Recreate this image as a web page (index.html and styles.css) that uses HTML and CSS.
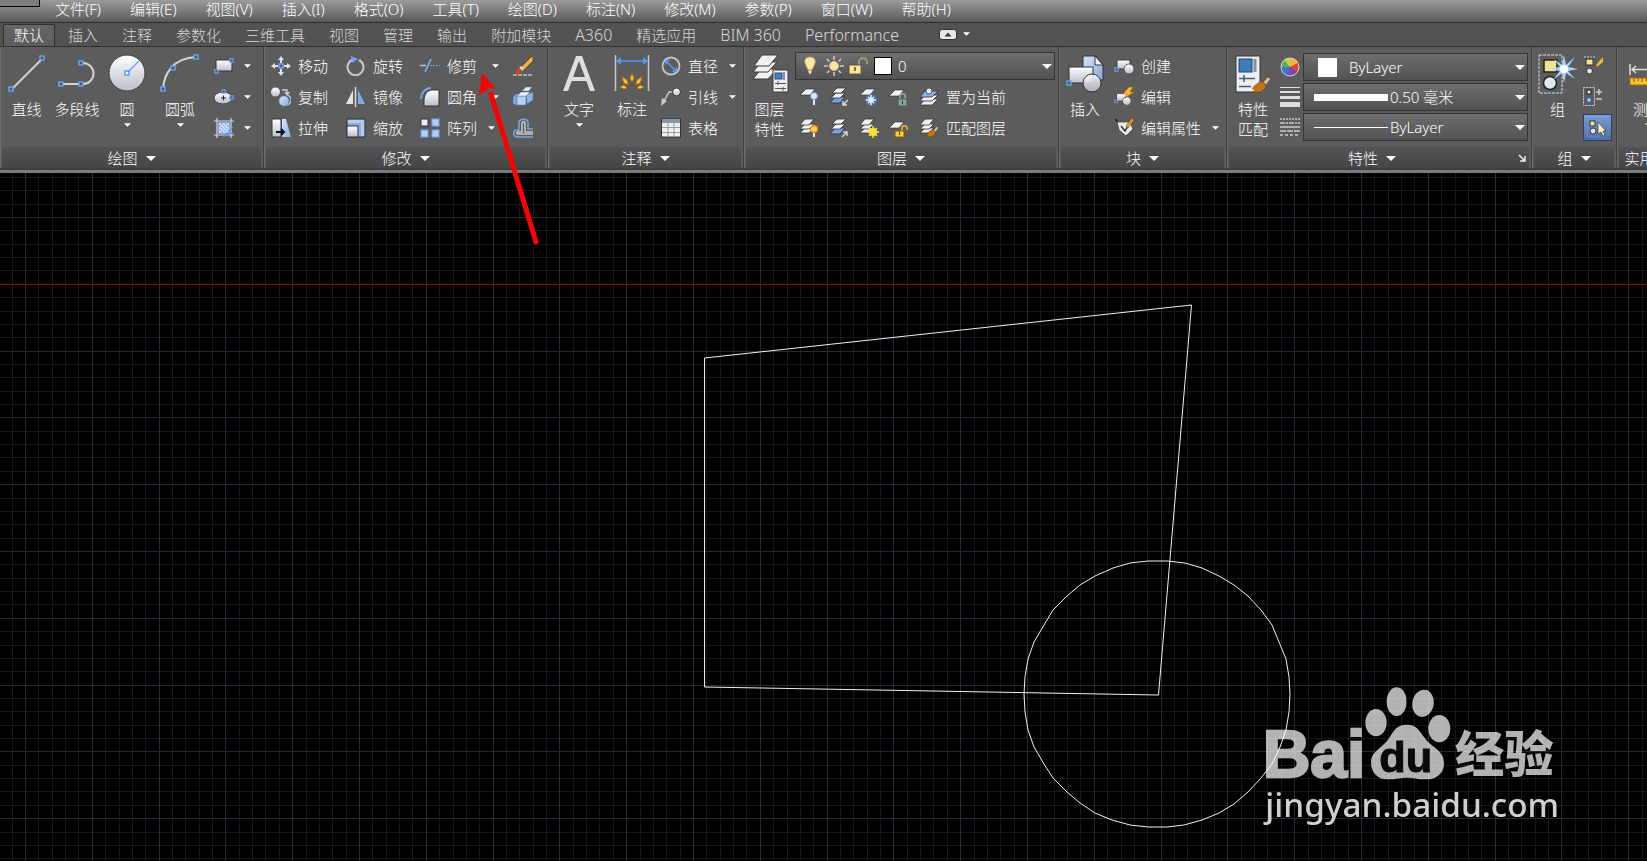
FILE: index.html
```html
<!DOCTYPE html>
<html lang="zh-CN">
<head>
    <meta charset="utf-8">
    <title>CAD</title>
    <link rel="stylesheet" href="styles.css">
</head>
<body>
<svg class="defs" aria-hidden="true">
    <defs>
        <linearGradient id="silver" x1="0" y1="0" x2="0" y2="1"><stop offset="0" stop-color="#ffffff"/><stop offset="1" stop-color="#b9becb"/></linearGradient>
        <linearGradient id="blue" x1="0" y1="0" x2="1" y2="1"><stop offset="0" stop-color="#d9e8fb"/><stop offset="1" stop-color="#83a9dc"/></linearGradient>
    </defs>
    <symbol id="down" viewBox="0 0 8 4"><path d="M0 0H8L4 4Z" fill="#fff"/></symbol>
    <symbol id="grip" viewBox="0 0 6 6"><rect x="1" y="1" width="4" height="4" fill="#4b5568" stroke="#6ea3f2" stroke-width="1.4"/></symbol>
    <symbol id="sheet" viewBox="0 0 20 20"><path d="M7 2H16L11 8H1Z" fill="#f4f4f4" stroke="#333" stroke-width=".7"/></symbol>
    <symbol id="stack" viewBox="0 0 20 20"><g fill="#eee" stroke="#333" stroke-width=".8"><path d="M6 10H15L10 15H1Z"/><path d="M6 6H15L10 11H1Z"/><path d="M6 1H15L10 7H1Z"/></g></symbol>
    <symbol id="bstack" viewBox="0 0 20 20"><g fill="#eee" stroke="#333" stroke-width=".8"><path d="M6 10H16L11 16H1Z" fill="#6fa3e6"/><path d="M7 6H16L11 11H2Z"/><path d="M8 1H17L12 6H3Z"/></g></symbol>
    <symbol id="block" viewBox="0 0 20 20"><path d="M3 4H16V13H3Z" fill="url(#silver)" stroke="#3c3c3c"/><circle cx="15" cy="13" r="5" fill="url(#silver)" stroke="#555"/><use href="#grip" x="0" y="11" width="5" height="5"/></symbol>
    <symbol id="brush" viewBox="0 0 20 20"><path d="M12 7 17 1 20 3 15 10Z" fill="#d9c7ab" stroke="#5a3c1e" stroke-width=".6"/><path d="M2 11C6 8 9 5 12 7L15 11C13 16 9 19 0 18L3 15 0 14Z" fill="#c0731b" stroke="#6d3a08" stroke-width=".6"/></symbol>
</svg>

<div class="app">
    <nav class="menubar">
        <span class="corner"></span>
        <button>文件(F)</button>
        <button>编辑(E)</button>
        <button>视图(V)</button>
        <button>插入(I)</button>
        <button>格式(O)</button>
        <button>工具(T)</button>
        <button>绘图(D)</button>
        <button>标注(N)</button>
        <button>修改(M)</button>
        <button>参数(P)</button>
        <button>窗口(W)</button>
        <button>帮助(H)</button>
    </nav>

    <nav class="tabs">
        <button class="active">默认</button>
        <button>插入</button>
        <button>注释</button>
        <button>参数化</button>
        <button>三维工具</button>
        <button>视图</button>
        <button>管理</button>
        <button>输出</button>
        <button>附加模块</button>
        <button class="latin">A360</button>
        <button>精选应用</button>
        <button class="latin">BIM 360</button>
        <button class="latin">Performance</button>
        <button class="collapse" aria-label="最小化">
            <svg width="18" height="11" viewBox="0 0 18 11"><rect x=".5" y=".5" width="17" height="10" rx="2.5" fill="#e6e8ec" stroke="#333"/><path d="M5.500 7.500H12.500L9 3.500Z" fill="#333"/></svg>
            <svg class="arrow"><use href="#down"/></svg>
        </button>
    </nav>

    <div class="ribbon">
        <!-- draw -->
        <section class="panel draw">
            <div class="body">
                <button class="big">
                    <svg viewBox="0 0 40 40"><path d="M5 35 35 5" stroke="#d2d2d2" stroke-width="2"/><use href="#grip" x="1" y="32" width="6" height="6"/><use href="#grip" x="32" y="1" width="6" height="6"/></svg>
                    直线
                </button>
                <button class="big">
                    <svg viewBox="0 0 40 40"><path d="M4 30H26A10 10 0 0 0 26 9H23" fill="none" stroke="#d2d2d2" stroke-width="2"/><use href="#grip" x="1" y="27" width="6" height="6"/><use href="#grip" x="21" y="27" width="6" height="6"/><use href="#grip" x="21" y="6" width="6" height="6"/></svg>
                    多段线
                </button>
                <button class="big">
                    <svg viewBox="0 0 40 40"><circle cx="20" cy="19" r="18" fill="url(#silver)" stroke="#3d3f44"/><path d="M20 19 32 7" stroke="#6da4f5" stroke-width="1.500"/><rect x="18" y="17" width="4" height="4" fill="#fff" stroke="#5d98f0" stroke-width="1.500"/></svg>
                    圆
                    <svg class="arrow"><use href="#down"/></svg>
                </button>
                <button class="big">
                    <svg viewBox="0 0 40 40"><path d="M3 35C4 20 13 4 36 3" fill="none" stroke="#d2d2d2" stroke-width="2"/><use href="#grip" x="0" y="32" width="6" height="6"/><use href="#grip" x="10" y="11" width="6" height="6"/><use href="#grip" x="33" y="0" width="6" height="6"/></svg>
                    圆弧
                    <svg class="arrow"><use href="#down"/></svg>
                </button>
                <div class="col">
                    <button class="tool" aria-label="矩形"><svg viewBox="0 0 20 20"><rect x="2" y="4" width="16" height="11" fill="url(#silver)" stroke="#333"/><use href="#grip" x="0" y="13" width="5" height="5"/><use href="#grip" x="15" y="2" width="5" height="5"/></svg><svg class="arrow"><use href="#down"/></svg></button>
                    <button class="tool" aria-label="椭圆"><svg viewBox="0 0 20 20"><ellipse cx="9" cy="11" rx="9" ry="6" fill="url(#silver)" stroke="#444"/><path d="M7 11H12M9.500 8.500V13.500" stroke="#222"/><use href="#grip" x="7" y="2" width="5" height="5"/><use href="#grip" x="15" y="8" width="5" height="5"/></svg><svg class="arrow"><use href="#down"/></svg></button>
                    <button class="tool" aria-label="图案填充"><svg viewBox="0 0 20 20"><rect x="4" y="4" width="12" height="12" fill="#cbdcf6" stroke="#3868bb"/><path d="M5 7 13 15M7 5 15 13M11 5 15 9M5 11 9 15" stroke="#79a4e6"/><path d="M0 3H20M0 17H20M3 0V20M17 0V20" stroke="#d7d7d7" stroke-width="1.200"/><path d="M9 20 19 9M14 15V19M11 15.500H19" stroke="#5796f5"/></svg><svg class="arrow"><use href="#down"/></svg></button>
                </div>
            </div>
            <h2>绘图<svg class="arrow"><use href="#down"/></svg></h2>
        </section>

        <!-- modify -->
        <section class="panel modify">
            <div class="body">
                <div class="col">
                    <button class="tool"><svg viewBox="0 0 20 20"><path d="M10 0 13 4H11V7H9V4H7ZM10 20 13 16H11V13H9V16H7ZM0 10 4 7V9H7V11H4V13ZM20 10 16 7V9H13V11H16V13Z" fill="#e2e2e2"/><rect x="8" y="8" width="4" height="4" fill="none" stroke="#68a0f4" stroke-width="1.500"/></svg>移动</button>
                    <button class="tool"><svg viewBox="0 0 20 20"><circle cx="4.500" cy="5" r="4.500" fill="url(#silver)"/><path d="M16 8A5 5 0 1 1 14 18" fill="none" stroke="#a9c2e6" stroke-width="1.500"/><circle cx="13" cy="14" r="5" fill="url(#blue)" stroke="#6f93c5" stroke-width=".5"/><path d="M11 3H16V7M14 5 16 7.500 18.500 5" fill="none" stroke="#ccc" stroke-width="1.300"/></svg>复制</button>
                    <button class="tool"><svg viewBox="0 0 20 20"><path d="M1 1H10V19H1Z" fill="url(#silver)" stroke="#333"/><path d="M11 1H15L20 19H11Z" fill="url(#blue)"/><path d="M5 14H13M10 11 13 14 10 17" fill="none" stroke="#111" stroke-width="2"/></svg>拉伸</button>
                </div>
                <div class="col">
                    <button class="tool"><svg viewBox="0 0 20 20"><path d="M13 4A8 8 0 1 1 6 4" fill="none" stroke="#c8c8c8" stroke-width="2"/><path d="M5 0 12 3 6 7Z" fill="#6ea5f4"/></svg>旋转</button>
                    <button class="tool"><svg viewBox="0 0 20 20"><path d="M7 3V17H0Z" fill="#e3e3e3"/><path d="M12 3V17H19Z" fill="#7fabea"/><path d="M9.500 0V20" stroke="#ddd" stroke-width="1.500"/></svg>镜像</button>
                    <button class="tool"><svg viewBox="0 0 20 20"><rect x="1" y="1" width="18" height="18" fill="#8eade0" stroke="#333"/><path d="M2 2H18V18H15V5H2Z" fill="#b5cbef"/><rect x="1" y="8" width="11" height="11" fill="url(#silver)" stroke="#333"/></svg>缩放</button>
                </div>
                <div class="col">
                    <button class="tool"><svg viewBox="0 0 20 20"><path d="M5 16 11 3" stroke="#6fa5f4" stroke-width="1.800"/><path d="M0 9.500H6" stroke="#c5c5c5" stroke-width="1.500"/><path d="M10 9.500H20" stroke="#6fa5f4" stroke-width="1.200" stroke-dasharray="2 1"/></svg>修剪<svg class="arrow"><use href="#down"/></svg></button>
                    <button class="tool"><svg viewBox="0 0 20 20"><path d="M4 19V13C4 7 8 3 12 3H19V19Z" fill="url(#silver)" stroke="#333"/><path d="M1 12C1 5 6 1 11 1" fill="none" stroke="#6fa5f4" stroke-width="1.800"/></svg>圆角<svg class="arrow"><use href="#down"/></svg></button>
                    <button class="tool"><svg viewBox="0 0 20 20"><rect x="1" y="1" width="7" height="7" fill="#eee" stroke="#333"/><g fill="#b4cdf5" stroke="#6fa0ee"><rect x="12" y="1" width="7" height="7"/><rect x="1" y="12" width="7" height="7"/><rect x="12" y="12" width="7" height="7"/></g></svg>阵列<svg class="arrow near"><use href="#down"/></svg></button>
                </div>
                <div class="col">
                    <button class="tool" aria-label="删除"><svg viewBox="0 0 20 20"><path d="M0 19H20" stroke="#eee" stroke-dasharray="4 1"/><path d="M8 11 18 1 20 0V5L11 14Z" fill="#e9b23a" stroke="#5b3a0d" stroke-width=".7"/><path d="M8 10 11 13 9 15 6 12Z" fill="#ddd"/><path d="M3 14 7 12 9 15C8 18 5 18 3 18Z" fill="#d0480e"/></svg></button>
                    <button class="tool" aria-label="分解"><svg viewBox="0 0 20 20"><g stroke="#4f6d99" stroke-width=".5"><path d="M0 10 3 7H6V15L3 18 0 17Z" fill="#7fa6dc"/><path d="M10 3 13 0H19L16 4H9Z" fill="#e8effa"/><path d="M13 8 20 5V13L14 17Z" fill="#8db2e4"/><path d="M4 9H13V18H4Z" fill="#b6d1f4"/><path d="M4 9 8 5H17L13 9Z" fill="#eef4fc"/></g></svg></button>
                    <button class="tool" aria-label="偏移"><svg viewBox="0 0 20 20"><path d="M20 19H4C-1 18 0 12 4 12H6V5C6 0 15 0 15 5V11H20" fill="none" stroke="#78a6ec" stroke-width="1.500"/><path d="M20 16H5C3 16 3 14 5 14H9V6C9 3 12 3 12 6V14H20" fill="none" stroke="#c9c9c9" stroke-width="1.500"/></svg></button>
                </div>
            </div>
            <h2>修改<svg class="arrow"><use href="#down"/></svg></h2>
        </section>

        <!-- annotation -->
        <section class="panel annotate">
            <div class="body">
                <button class="big">
                    <svg viewBox="0 0 40 40"><path d="M4 37 17 2H23L36 37H31L20 7 9 37ZM10 23H30V27H9Z" fill="#dedede"/></svg>
                    文字
                    <svg class="arrow"><use href="#down"/></svg>
                </button>
                <button class="big">
                    <svg viewBox="0 0 40 40"><path d="M3.500 1V37M36.500 1V37" stroke="#c5c5c5" stroke-width="1.500"/><path d="M6 7H34" stroke="#5795ed" stroke-width="1.500"/><path d="M4 7 9 3V11ZM36 7 31 3V11Z" fill="#5795ed"/><g fill="#ffc62a" stroke="#c9650e" stroke-width=".7"><path d="M20 20 22 24 20 28 18 24Z"/><path d="M10 23 15 26 16 31 12 29Z"/><path d="M30 23 25 26 24 31 28 29Z"/><path d="M8 33 12 31 15 34 12 35Z"/><path d="M32 33 28 31 25 34 28 35Z"/></g></svg>
                    标注
                </button>
                <div class="col">
                    <button class="tool"><svg viewBox="0 0 20 20"><circle cx="10" cy="10" r="8.500" fill="none" stroke="#c5c5c5" stroke-width="1.800"/><path d="M6 6 14 14" stroke="#5a99f5" stroke-width="1.500"/><path d="M4 4H9L4 9ZM16 16H11L16 11Z" fill="#5a99f5"/></svg>直径<svg class="arrow"><use href="#down"/></svg></button>
                    <button class="tool"><svg viewBox="0 0 20 20"><path d="M12 5H8L3 14" fill="none" stroke="#ccc" stroke-width="1.500"/><path d="M0 19 1 11 6 14Z" fill="#ccc"/><circle cx="15.500" cy="5" r="4" fill="url(#silver)" stroke="#333"/></svg>引线<svg class="arrow"><use href="#down"/></svg></button>
                    <button class="tool"><svg viewBox="0 0 20 20"><rect x=".5" y="1" width="19" height="18" fill="#eee" stroke="#333"/><path d="M1 2H19V5H1Z" fill="#8796ad"/><path d="M1 9.500H19M1 14.500H19M7 5V19M13 5V19" stroke="#9a9a9a"/></svg>表格</button>
                </div>
            </div>
            <h2>注释<svg class="arrow"><use href="#down"/></svg></h2>
        </section>

        <!-- layers -->
        <section class="panel layers">
            <div class="body">
                <button class="big">
                    <svg viewBox="0 0 40 40"><g fill="#f1f1f1" stroke="#3c3c3c"><path d="M11 15H27L18 25H3Z"/><path d="M11 8H27L18 18H3Z"/><path d="M12 1H28L19 12H4Z"/></g><rect x="23" y="16" width="15" height="22" fill="#eceef2" stroke="#3c3c3c"/><rect x="25" y="19" width="7" height="6" fill="#4b7fc4" stroke="#274b80"/><path d="M34 18V26" stroke="#8793a8" stroke-width="2"/><path d="M25 29.500H36M25 34.500H36M28 27V31M33 33V37" stroke="#555"/></svg>
                    图层<br>特性
                </button>
                <div class="layer-side">
                    <div class="combo">
                        <svg width="20" height="20" viewBox="0 0 20 20"><path d="M10 1C14 1 16 4 15 7L12 14H8L5 7C4 4 6 1 10 1Z" fill="#fbe7a0" stroke="#c9a94f" stroke-width=".6"/><path d="M8 14H12V16L10 19 8 16Z" fill="#ddd" stroke="#555" stroke-width=".5"/></svg>
                        <svg width="20" height="20" viewBox="0 0 20 20"><path d="M10 0V4M10 16V20M0 10H4M16 10H20M3 3 5.500 5.500M14.500 14.500 17 17M17 3 14.500 5.500M3 17 5.500 14.500" stroke="#cfcfc4" stroke-width="1.500"/><circle cx="10" cy="10" r="4.500" fill="#fbe5a0" stroke="#d8c69a"/></svg>
                        <svg width="20" height="20" viewBox="0 0 20 20"><path d="M11 9V6C11 1 19 1 19 6V8" fill="none" stroke="#a59c7f" stroke-width="1.800"/><rect x="1" y="9" width="12" height="9" fill="#fbe7a0" stroke="#67583a"/><path d="M7 11V15" stroke="#554827" stroke-width="1.500"/></svg>
                        <span class="swatch outlined"></span>
                        <select aria-label="图层"><option>0</option></select>
                        <svg class="arrow"><use href="#down"/></svg>
                    </div>
                    <div class="layer-row">
                        <button class="tool" aria-label="关闭图层"><svg viewBox="0 0 20 20"><use href="#sheet"/><path d="M15 12V18" stroke="#eee" stroke-width="2"/><circle cx="15" cy="9" r="3.500" fill="#d5eaff" stroke="#6b9fdc"/></svg></button>
                        <button class="tool" aria-label="隔离图层"><svg viewBox="0 0 20 20"><use href="#bstack"/><path d="M19 13 14 18M14 14V18H18" fill="none" stroke="#d5d5d5" stroke-width="1.500"/></svg></button>
                        <button class="tool" aria-label="冻结图层"><svg viewBox="0 0 20 20"><use href="#sheet"/><path d="M12 7V19M6 13H18M8 9 16 17M16 9 8 17" stroke="#4b7cba" stroke-width="3"/><path d="M12 8V18M7 13H17M9 10 15 16M15 10 9 16" stroke="#eaf4ff" stroke-width="1.500"/></svg></button>
                        <button class="tool" aria-label="锁定图层"><svg viewBox="0 0 20 20"><use href="#sheet" x="-1" y="1"/><path d="M11 12V9C11 6 16 6 16 9V12" fill="none" stroke="#94aaa8" stroke-width="1.500"/><rect x="9" y="12" width="9" height="7" fill="#86a3a2" stroke="#445b5a"/><path d="M13.500 14V17" stroke="#333"/></svg></button>
                        <button class="tool"><svg viewBox="0 0 20 20"><g stroke="#333" stroke-width=".8" fill="#eee"><path d="M6 12H19L13 18H1Z"/><path d="M6 8H19L13 14H1Z"/><path d="M6 4H19L13 10H1Z" fill="#82b2ef"/></g><circle cx="10" cy="4" r="3" fill="#eee" stroke="#555"/></svg>置为当前</button>
                    </div>
                    <div class="layer-row">
                        <button class="tool" aria-label="打开所有图层"><svg viewBox="0 0 20 20"><use href="#stack"/><path d="M15 14V19" stroke="#eee" stroke-width="2"/><circle cx="15" cy="11" r="3.500" fill="#ffd95c" stroke="#ef8613" stroke-width="1.500"/></svg></button>
                        <button class="tool" aria-label="取消隔离"><svg viewBox="0 0 20 20"><use href="#bstack"/><path d="M13 19 18 14M14 14H18V18" fill="none" stroke="#d5d5d5" stroke-width="1.500"/></svg></button>
                        <button class="tool" aria-label="解冻所有图层"><svg viewBox="0 0 20 20"><use href="#stack"/><path d="M14 8V20M8 14H20M10 10 18 18M18 10 10 18" stroke="#f5dd77" stroke-width="1.500"/><circle cx="14" cy="14" r="4" fill="#ffe12e"/></svg></button>
                        <button class="tool" aria-label="解锁图层"><svg viewBox="0 0 20 20"><use href="#sheet" x="-1" y="2"/><path d="M13 13V10C13 7 18 7 18 10V12" fill="none" stroke="#edbd26" stroke-width="1.500"/><rect x="6" y="13" width="9" height="6" fill="#f9cf3d" stroke="#7c5c0b"/><path d="M10.500 14V17" stroke="#553b00"/></svg></button>
                        <button class="tool"><svg viewBox="0 0 20 20"><use href="#stack"/><use href="#brush" x="7" y="8" width="13" height="12"/></svg>匹配图层</button>
                    </div>
                </div>
            </div>
            <h2>图层<svg class="arrow"><use href="#down"/></svg></h2>
        </section>

        <!-- block -->
        <section class="panel block">
            <div class="body">
                <button class="big">
                    <svg viewBox="0 0 40 40"><path d="M18 2H31L38 11V26H18Z" fill="url(#blue)" stroke="#333"/><path d="M30 2V11H38Z" fill="#f2f5fb" stroke="#333"/><rect x="4" y="13" width="24" height="16" fill="url(#silver)" stroke="#333"/><circle cx="27" cy="29" r="9" fill="url(#silver)" fill-opacity=".85" stroke="#333"/><use href="#grip" x="1" y="26" width="6" height="6"/></svg>
                    插入
                </button>
                <div class="col">
                    <button class="tool"><svg viewBox="0 0 20 20"><use href="#block"/></svg>创建</button>
                    <button class="tool"><svg viewBox="0 0 20 20"><use href="#block" y="3" width="17" height="17"/><path d="M15 0 9 7H13L11 11 20 5H16L19 0Z" fill="#ffb92b" stroke="#a75b09" stroke-width=".6"/></svg>编辑</button>
                    <button class="tool"><svg viewBox="0 0 20 20"><path d="M1 1 5 5" stroke="#222" stroke-width="1.500"/><path d="M3 4H16L19 11 12 18 5 12Z" fill="#e8e8e8" stroke="#333" stroke-width=".7"/><path d="M7 8 11 13 14 8" fill="none" stroke="#333" stroke-width="1.500"/><path d="M12 8 18 0 20 2 14 10Z" fill="#e49a2d" stroke="#6e410c" stroke-width=".5"/></svg>编辑属性<svg class="arrow"><use href="#down"/></svg></button>
                </div>
            </div>
            <h2>块<svg class="arrow"><use href="#down"/></svg></h2>
        </section>

        <!-- properties -->
        <section class="panel props">
            <div class="body">
                <button class="big">
                    <svg viewBox="0 0 40 40"><rect x="3" y="2" width="24" height="36" fill="#eceef2" stroke="#333"/><rect x="6" y="5" width="13" height="13" fill="#3e7dba" stroke="#1d4878"/><path d="M22 5V18" stroke="#8590a3" stroke-width="3"/><path d="M6 24.500H22M6 32.500H18M11 21V28" stroke="#4d5769" stroke-width="1.500"/><use href="#brush" x="18" y="22" width="21" height="18"/></svg>
                    特性<br>匹配
                </button>
                <div class="prop-rows">
                    <div class="prop">
                        <svg width="20" height="20" viewBox="0 0 20 20"><path d="M10 10V1A9 9 0 0 1 18 6Z" fill="#f4b53a"/><path d="M10 10 18 6A9 9 0 0 1 17 15Z" fill="#df4432"/><path d="M10 10 17 15A9 9 0 0 1 7 18Z" fill="#7748bd"/><path d="M10 10 7 18A9 9 0 0 1 1 10Z" fill="#3d73dc"/><path d="M10 10H1A9 9 0 0 1 4 3Z" fill="#57b451"/><path d="M10 10 4 3A9 9 0 0 1 10 1Z" fill="#bdd64b"/><circle cx="10" cy="10" r="9" fill="none" stroke="#d8d8d8"/></svg>
                        <div class="combo">
                            <span class="swatch"></span>
                            <select aria-label="颜色"><option>ByLayer</option></select>
                            <svg class="arrow"><use href="#down"/></svg>
                        </div>
                    </div>
                    <div class="prop">
                        <svg width="20" height="20" viewBox="0 0 20 20"><path d="M0 0H20V1H0ZM0 4H20V6H0ZM0 9H20V12H0ZM0 15H20V20H0Z" fill="#ddd"/></svg>
                        <div class="combo">
                            <span class="weight thick"></span>
                            <select aria-label="线宽"><option>0.50 毫米</option></select>
                            <svg class="arrow"><use href="#down"/></svg>
                        </div>
                    </div>
                    <div class="prop">
                        <svg width="20" height="20" viewBox="0 0 20 20" stroke="#ccc" stroke-width="1.500"><path d="M0 2H20" stroke-dasharray="2 1"/><path d="M0 6H20" stroke-dasharray="5 1 2 1"/><path d="M0 10H20"/><path d="M0 14H20" stroke-dasharray="6 1"/><path d="M0 18H20" stroke-dasharray="3 2"/></svg>
                        <div class="combo">
                            <span class="weight"></span>
                            <select aria-label="线型"><option>ByLayer</option></select>
                            <svg class="arrow"><use href="#down"/></svg>
                        </div>
                    </div>
                </div>
            </div>
            <h2>特性<svg class="arrow"><use href="#down"/></svg>
                <svg class="launcher" viewBox="0 0 8 8"><path d="M1 1 6 6M7 2V7H2" fill="none" stroke="#eee" stroke-width="1.500"/></svg>
            </h2>
        </section>

        <!-- group -->
        <section class="panel group">
            <div class="body">
                <button class="big">
                    <svg viewBox="0 0 40 40"><rect x="1" y="1" width="23" height="38" fill="none" stroke="#ddd" stroke-dasharray="3 1"/><rect x="6" y="6" width="13" height="12" fill="#eee390" stroke="#222" stroke-width="1.500"/><circle cx="12" cy="29" r="6.500" fill="#dce9ef" stroke="#222" stroke-width="1.500"/><path d="M26 1 28 11 37 3 30 13 40 15 30 17 37 25 28 19 26 29 24 19 15 26 22 17 12 15 22 13 16 5 24 11Z" fill="#a9d5ff"/><circle cx="26" cy="15" r="4" fill="#fff"/></svg>
                    组
                </button>
                <div class="col">
                    <button class="tool" aria-label="组编辑"><svg viewBox="0 0 20 20"><path d="M1 1H12" stroke="#ccc" stroke-dasharray="2 1"/><rect x="3" y="3" width="7" height="6" fill="#eee390" stroke="#333"/><circle cx="6.500" cy="15" r="3" fill="#dbe8ec" stroke="#333"/><path d="M13 9 20 1V6L14 11Z" fill="#efbb34"/><path d="M11 12 13 9 15 11Z" fill="#cf3c27"/></svg></button>
                    <button class="tool" aria-label="添加删除"><svg viewBox="0 0 20 20"><rect x=".5" y=".5" width="11" height="18" fill="none" stroke="#ccc" stroke-dasharray="2 1"/><rect x="4" y="3" width="4" height="4" fill="#ddd" stroke="#222"/><circle cx="6" cy="13" r="2.500" fill="#9fc3f7" stroke="#234f94"/><path d="M13 5H19M16 2V8M13 12H19" stroke="#ccc" stroke-width="1.500"/></svg></button>
                    <button class="tool on" aria-label="组选择"><svg viewBox="0 0 20 20"><rect x=".5" y=".5" width="11" height="18" fill="none" stroke="#4e93f5" stroke-dasharray="2 1"/><rect x="3" y="3" width="5" height="5" fill="#eee390" stroke="#333"/><circle cx="6" cy="13" r="3" fill="#dbe8ec" stroke="#333"/><path d="M11 4V16L14 14 16 18 18 17 16 13H19Z" fill="#f7f4c9" stroke="#333" stroke-width=".7"/></svg></button>
                </div>
            </div>
            <h2>组<svg class="arrow"><use href="#down"/></svg></h2>
        </section>

        <!-- utilities -->
        <section class="panel utils">
            <div class="body">
                <button class="big">
                    <svg viewBox="0 0 40 40"><path d="M2 10V21M38 10V21M4 15.500H36M8 12 4 15.500 8 19" fill="none" stroke="#ddd" stroke-width="1.500"/><rect x="2" y="24" width="36" height="7" fill="#f3c531" stroke="#a9680e"/><path d="M6 24V28M10 24V27M14 24V28M18 24V27M22 24V28M26 24V27M30 24V28" stroke="#835008"/></svg>
                    测量
                    <svg class="arrow"><use href="#down"/></svg>
                </button>
            </div>
            <h2>实用工具<svg class="arrow"><use href="#down"/></svg></h2>
        </section>
    </div>

    <main class="canvas">
        <svg class="drawing" id="drawing">
            <path id="minor" class="minor"/>
            <path id="major" class="major"/>
            <line class="axis" x1="0" y1="111" x2="100%" y2="111"/>
            <polygon class="shape" points="704.5,185 1191.500,132 1158.500,522 704.5,514"/>
            <polygon class="shape" points="1148,388 1167,388 1185,390 1202,395 1219,403 1234,412 1248,423 1261,437 1272,452 1286,486 1289,504 1290,521 1289,539 1286,557 1280,574 1272,591 1261,605 1248,619 1234,631 1219,640 1202,647 1184,652 1167,654 1148,654 1130,652 1112,647 1095,640 1080,630 1067,619 1053,605 1044,591 1034,574 1028,557 1025,539 1024,521 1025,504 1028,486 1034,469 1044,452 1053,437 1067,423 1080,412 1095,403 1113,395 1130,390"/>
        </svg>
        <svg class="watermark" viewBox="0 0 990 510">
            <g class="logo-fill">
                <text class="logo" x="68" y="318">Bai</text>
                <ellipse cx="408" cy="155" rx="32" ry="41"/>
                <ellipse cx="470" cy="92" rx="30" ry="43"/>
                <ellipse cx="549" cy="97" rx="32" ry="41" transform="rotate(10 549 97)"/>
                <ellipse cx="598" cy="173" rx="33" ry="41"/>
                <path d="M502 161C540 161 543 198 575 222C605 244 612 258 612 278C612 308 588 325 560 325C532 325 520 320 502 320C482 320 465 325 440 325C415 325 393 305 393 275C393 242 425 232 445 205C460 183 466 161 502 161Z"/>
                <text class="logo-cn" x="645" y="304">经验</text>
            </g>
            <text class="logo-du" x="418" y="302">du</text>
            <text class="site" x="76" y="439">jingyan.baidu.com</text>
        </svg>
    </main>

    <svg class="pointer" viewBox="0 0 70 180" aria-hidden="true">
        <path d="M59 172 14 24" stroke="#fe0000" stroke-width="5" stroke-linecap="round"/>
        <path d="M5 3 19 19 12 18 2 25Z" fill="#fe0000"/>
    </svg>
</div>

<script>
    const STEP = 66.8;

    function drawGrid() {
        const svg = document.getElementById('drawing');
        const w = svg.clientWidth;
        const h = svg.clientHeight;
        let minor = '';
        let major = '';
        // first major lines sit at x = 25, y = 44
        for (let i = -1; 25 + i * STEP / 5 < w; i++) {
            const line = `M${Math.round(25 + i * STEP / 5) + 0.5} 0V${h}`;
            if (i % 5 === 0) major += line; else minor += line;
        }
        for (let i = -3; 44 + i * STEP / 5 < h; i++) {
            const line = `M0 ${Math.round(44 + i * STEP / 5) + 0.5}H${w}`;
            if (i % 5 === 0) major += line; else minor += line;
        }
        document.getElementById('minor').setAttribute('d', minor);
        document.getElementById('major').setAttribute('d', major);
    }

    drawGrid();
    window.addEventListener('resize', drawGrid);
</script>
</body>
</html>
```
FILE: styles.css
```css
* {
    box-sizing: border-box;
}
body {
    margin: 0;
    background: #000;
    color: #fff;
    font-family: "Noto Sans", "Noto Sans CJK SC", sans-serif;
    font-size: 15px;
    font-weight: 300;
    line-height: 20px;
    overflow: hidden;
}
button, select {
    margin: 0;
    padding: 0;
    border: 0;
    background: none;
    color: inherit;
    font: inherit;
    white-space: nowrap;
}
svg {
    display: block;
    flex: none;
}
.defs {
    position: absolute;
    width: 0;
    height: 0;
}
.app {
    position: relative;
    display: flex;
    flex-direction: column;
    height: 100vh;
}
.arrow {
    width: 7px;
    height: 4px;
}

/* menu bar */
.menubar {
    display: flex;
    flex: none;
    gap: 29px;
    height: 23px;
    background: linear-gradient(#9c9c9c, #585858);
    border-bottom: 1px solid #2b2b2b;
}
.menubar button {
    height: 18px;
    line-height: 18px;
}
.corner {
    width: 40px;
    height: 7px;
    margin-right: -14px;
    background: #7d7d7d;
    border: solid #000;
    border-width: 0 1px 1px 0;
}

/* ribbon tabs */
.tabs {
    display: flex;
    flex: none;
    align-items: flex-end;
    height: 24px;
    padding: 0 0 0 3px;
    background: #535353;
    border-bottom: 1px solid #2f2f2f;
    color: #d8d8d8;
}
.tabs button {
    height: 22px;
    padding: 0 12px;
}
.tabs .latin {
    font-size: 16px;
}
.tabs .active {
    height: 22px;
    margin-right: 1px;
    padding: 0 10px 1px;
    background: linear-gradient(#666, #5c5c5c);
    border: 1px solid #2f2f2f;
    border-bottom: 0;
    border-radius: 2px 2px 0 0;
    color: #fff;
}
.tabs .collapse {
    display: flex;
    align-items: center;
    gap: 6px;
    padding: 0 0 2px 28px;
}

/* ribbon */
.ribbon {
    display: flex;
    flex: none;
    overflow: hidden;
    background: #5c5c5c;
    border-bottom: 3px solid #7b7b7b;
}
.panel {
    flex: none;
    border: solid #3f3f3f;
    border-width: 0 1px 2px 0;
    box-shadow: inset 1px 0 #6a6a6a;
}
.body {
    display: grid;
    height: 100px;
}
.panel h2 {
    position: relative;
    display: flex;
    align-items: center;
    justify-content: center;
    gap: 8px;
    height: 21px;
    margin: 0 2px;
    padding-top: 1px;
    background: linear-gradient(#535353, #454545);
    font-size: 15px;
    font-weight: inherit;
}
.panel h2 .arrow {
    width: 10px;
    height: 5px;
}
.props h2 {
    padding-right: 14px;
}
.launcher {
    position: absolute;
    right: 3px;
    bottom: 6px;
    width: 8px;
    height: 8px;
}
.draw { width: 264px; }
.draw .body { grid-template-columns: 53px 48px 52px 54px 1fr; }
.modify { width: 284px; }
.modify .body { grid-template-columns: 75px 74px 93px 1fr; padding-left: 7px; }
.annotate { width: 196px; }
.annotate .body { grid-template-columns: 62px 44px 1fr; }
.layers { width: 315px; }
.layers .body { grid-template-columns: 51px 1fr; }
.block { width: 168px; }
.block .body { grid-template-columns: 52px 1fr; }
.props { width: 305px; }
.props .body { grid-template-columns: 52px 1fr; }
.group { width: 85px; }
.group .body { grid-template-columns: 51px 1fr; }
.utils { width: 94px; }
.utils .body { grid-template-columns: 62px; }

.big {
    display: flex;
    flex-direction: column;
    align-items: center;
    justify-content: flex-start;
    padding-top: 7px;
}
.big svg {
    width: 40px;
    height: 40px;
    margin-bottom: 5px;
}
.big .arrow {
    width: 7px;
    height: 4px;
    margin: 4px 0 0;
}
.col {
    display: flex;
    flex-direction: column;
    padding-top: 3px;
}
.draw .col { padding-left: 7px; }
.annotate .col { padding-left: 7px; }
.block .col { padding-left: 3px; }
.tool {
    display: flex;
    align-items: center;
    gap: 7px;
    height: 31px;
}
.tool svg {
    width: 20px;
    height: 20px;
}
.tool .arrow {
    width: 7px;
    height: 4px;
    margin-left: 4px;
}
.modify .tool .arrow {
    margin-left: 8px;
}
.modify .tool .near {
    margin-left: 4px;
}
.draw .tool .arrow {
    margin-left: 3px;
}
.tool.on {
    width: 29px;
    height: 27px;
    margin-top: 2px;
    padding-left: 3px;
    background: linear-gradient(#7b9dd2, #4f6fa6);
    border: 1px solid #2c3f66;
}

/* drop-downs */
.combo {
    position: relative;
    display: flex;
    align-items: center;
    height: 28px;
    background: linear-gradient(#6e6e6e, #525252);
    border: 1px solid #343434;
}
.combo select {
    flex: 1;
    align-self: stretch;
    appearance: none;
    outline: none;
}
.combo .arrow {
    position: absolute;
    right: 2px;
    width: 10px;
    height: 5px;
    pointer-events: none;
}
.swatch {
    width: 19px;
    height: 19px;
    background: #fff;
}
.outlined {
    width: 18px;
    height: 18px;
    border: 1px solid #000;
}
.layer-side {
    padding: 5px 3px 0 0;
}
.layer-side .combo {
    gap: 4px;
    margin-bottom: 1px;
    padding-left: 4px;
}
.layer-side .swatch {
    margin: 0 2px;
}
.layer-row {
    display: flex;
    gap: 10px;
    padding-left: 4px;
}
.prop-rows {
    display: flex;
    flex-direction: column;
    gap: 2px;
    padding: 6px 3px 0 1px;
}
.prop {
    display: flex;
    align-items: center;
    gap: 3px;
}
.prop .combo {
    flex: 1;
    padding-left: 10px;
}
.prop .swatch {
    margin: 0 12px 0 4px;
}
.weight {
    width: 74px;
    height: 1px;
    margin-right: 2px;
    background: #fff;
}
.thick {
    height: 7px;
}

/* drawing area */
.canvas {
    position: relative;
    flex: 1;
    min-height: 0;
    background: #000;
}
.drawing {
    width: 100%;
    height: 100%;
}
.drawing path {
    fill: none;
}
.minor { stroke: #17171c; }
.major { stroke: #292936; }
.axis {
    stroke: #6c1c1c;
    shape-rendering: crispEdges;
}
.shape {
    fill: none;
    stroke: #f0f0ec;
}
.watermark {
    position: absolute;
    right: 77px;
    bottom: 20px;
    width: 330px;
    height: 170px;
}
.logo-fill {
    fill: #fff;
    opacity: .7;
}
.logo {
    stroke: #fff;
    stroke-width: 7px;
    font: bold 198px "Liberation Sans", sans-serif;
}
.logo-du {
    fill: #0a0a0a;
    stroke: #0a0a0a;
    stroke-width: 3px;
    font: bold 130px "Liberation Sans", sans-serif;
}
.logo-cn {
    font: 900 148px "Noto Sans CJK SC", sans-serif;
}
.site {
    fill: #d0d0d0;
    font: 500 100px "Noto Sans", sans-serif;
}

/* red pointer to the trim tool */
.pointer {
    position: absolute;
    top: 70px;
    left: 477px;
    width: 70px;
    height: 180px;
    fill: none;
    pointer-events: none;
}
```
